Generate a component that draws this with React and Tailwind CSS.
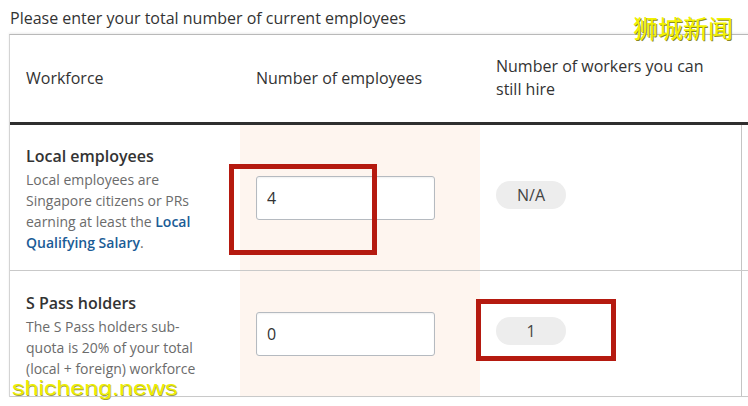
import React from 'react';

const rows = [
  {
    title: 'Local employees',
    value: '4',
    quota: 'N/A',
    height: 'h-[146px]',
    desc: (
      <>
        Local employees are Singapore citizens or PRs earning at least the{' '}
        <a className="font-semibold text-[#1b5c96]">Local Qualifying Salary</a>.
      </>
    ),
  },
  {
    title: 'S Pass holders',
    value: '0',
    quota: '1',
    height: 'h-[126px]',
    desc: <>The S Pass holders sub-quota is 20% of your total (local + foreign) workforce</>,
  },
];

const Pill = ({ children }) => (
  <span className="flex h-[28px] w-[70px] items-center justify-center rounded-full bg-[#ededed] text-[16px] text-[#444]">
    {children}
  </span>
);

export default function App() {
  return (
    <div className="relative h-[406px] w-[748px] overflow-hidden bg-white font-['Open_Sans','Liberation_Sans',sans-serif] text-[#333]">
      <p className="pl-[10px] pt-[6px] text-[16px] leading-[24px]">Please enter your total number of current employees</p>

      <div className="ml-[9px] mt-[4px] w-[760px] border-l border-t border-l-[#d4d4d4] border-t-[#b9b9b9] shadow-[0_-1px_2px_rgba(0,0,0,0.08)]">
        {/* header */}
        <div className="grid h-[90px] grid-cols-[230px_240px_261px_1fr] border-b-[3px] border-[#2f2f2f]">
          <div className="flex items-center px-4 pb-[1px] text-[16px]">Workforce</div>
          <div className="flex items-center px-4 pb-[1px] text-[16px]">Number of employees</div>
          <div className="flex items-center px-4 pb-[1px] text-[16px] leading-[23px]">Number of workers you can still hire</div>
          <div />
        </div>

        {rows.map((r) => (
          <div key={r.title} className={`grid grid-cols-[230px_240px_261px_1fr] border-b border-[#c9c9c9] ${r.height}`}>
            <div className="flex flex-col justify-center px-4 pt-[3px]">
              <div className="text-[16px] font-semibold leading-[22px] text-[#333]">{r.title}</div>
              <div className="mt-[2px] w-[180px] text-[14px] leading-[21px] text-[#6b6b6b]">{r.desc}</div>
            </div>
            <div className="flex items-center bg-[#fef5ef] px-4">
              <input
                readOnly
                value={r.value}
                className="h-[44px] w-[179px] rounded-[3px] border border-[#b5bac0] bg-white pl-[10px] text-[16px] text-[#333] shadow-[inset_0_1px_2px_rgba(0,0,0,0.06)] outline-none"
              />
            </div>
            <div className="flex items-center px-4 pb-[5px]">
              <Pill>{r.quota}</Pill>
            </div>
            <div className="border-l border-[#c4c4c4]" />
          </div>
        ))}
      </div>

      {/* annotation boxes */}
      <div className="absolute left-[229px] top-[164px] h-[91px] w-[148px] border-[5px] border-[#b51a10]" />
      <div className="absolute left-[476px] top-[299px] h-[62px] w-[140px] border-[5px] border-[#b51a10]" />

      {/* watermarks */}
      <div className="absolute left-[633px] top-[11px] font-['Noto_Sans_CJK_SC',sans-serif] text-[25px] leading-[32px] text-[#f2f200] [text-shadow:1px_1px_0_#8a8a20]">
        狮城新闻
      </div>
      <div className="absolute left-[12px] top-[374px] origin-left scale-x-[1.25] font-['Liberation_Sans',sans-serif] text-[20px] leading-[28px] text-[#eeee00] [text-shadow:0.5px_0.5px_0_#a0a040]">
        shicheng.news
      </div>
    </div>
  );
}
